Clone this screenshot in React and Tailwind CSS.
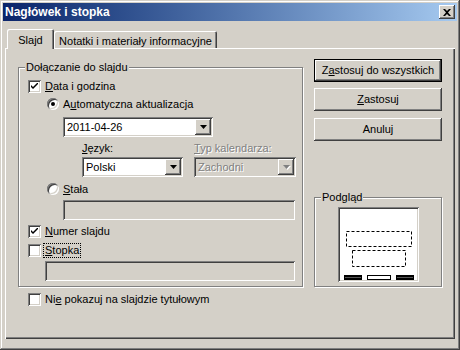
import { useState } from 'react'

const raised =
  'shadow-[inset_-1px_-1px_#404040,inset_1px_1px_#ffffff,inset_-2px_-2px_#808080,inset_2px_2px_#d4d0c8]'
const sunken =
  'shadow-[inset_1px_1px_#808080,inset_-1px_-1px_#ffffff,inset_2px_2px_#404040,inset_-2px_-2px_#d4d0c8]'
const etched = 'border border-[#808080] shadow-[inset_1px_1px_#ffffff,1px_1px_#ffffff]'

function Check({ checked, children, className = '', focus = false }) {
  return (
    <div className={'flex h-[13px] items-center ' + className}>
      <div className={'flex h-[13px] w-[13px] shrink-0 items-center justify-center bg-white ' + sunken}>
        {checked && (
          <svg width="7" height="7" viewBox="0 0 7 7">
            <path d="M0 2 L0 4 L2 6 L7 1 L7 -1 L2 4 Z" fill="#000" />
          </svg>
        )}
      </div>
      <span
        className={
          'ml-[2px] px-[2px] leading-[15px] ' +
          (focus ? 'outline outline-1 outline-dotted outline-black -outline-offset-1' : '')
        }
      >
        {children}
      </span>
    </div>
  )
}

function Radio({ checked, children, className = '' }) {
  return (
    <div className={'flex h-[12px] items-center ' + className}>
      <div
        className={
          'flex h-[12px] w-[12px] shrink-0 items-center justify-center rounded-full bg-white shadow-[inset_1px_1px_#808080,inset_-1px_-1px_#ffffff,inset_2px_2px_#404040,inset_-2px_-2px_#d4d0c8]'
        }
      >
        {checked && <div className="h-[4px] w-[4px] rounded-full bg-black" />}
      </div>
      <span className="ml-[4px] leading-[15px]">{children}</span>
    </div>
  )
}

function Arrow({ disabled }) {
  return (
    <svg width="7" height="4" viewBox="0 0 7 4" className={disabled ? 'drop-shadow-[1px_1px_0_#ffffff]' : ''}>
      <path d="M0 0 H7 L3.5 4 Z" fill={disabled ? '#808080' : '#000'} />
    </svg>
  )
}

function Combo({ value, disabled, className = '' }) {
  return (
    <div
      className={
        'flex h-[20px] items-center p-[2px] ' +
        sunken +
        ' ' +
        (disabled ? 'bg-[#d4d0c8] text-[#808080]' : 'bg-white') +
        ' ' +
        className
      }
    >
      <span className={'flex-1 pl-[2px] ' + (disabled ? '[text-shadow:1px_1px_#ffffff]' : '')}>{value}</span>
      <div className={'flex h-[16px] w-[16px] items-center justify-center bg-[#d4d0c8] ' + raised}>
        <Arrow disabled={disabled} />
      </div>
    </div>
  )
}

function Field({ className = '' }) {
  return <div className={'h-[20px] bg-[#d4d0c8] ' + sunken + ' ' + className} />
}

function Btn({ children, isDefault }) {
  if (isDefault) {
    return (
      <div className="h-[23px] w-[128px] border border-black">
        <div className={'flex h-full items-center justify-center bg-[#d4d0c8] ' + raised}>{children}</div>
      </div>
    )
  }
  return (
    <div className={'flex h-[23px] w-[128px] items-center justify-center bg-[#d4d0c8] ' + raised}>
      {children}
    </div>
  )
}

function Group({ label, className = '', children }) {
  return (
    <div className={'relative ' + etched + ' ' + className}>
      <span className="absolute -top-[8px] left-[6px] bg-[#d4d0c8] px-[1px] leading-[15px]">{label}</span>
      {children}
    </div>
  )
}

function Preview() {
  return (
    <div className={'mx-auto mt-[9px] h-[75px] w-[81px] bg-white p-[2px] ' + sunken}>
      <svg width="77" height="71" viewBox="0 0 77 71">
        <rect x="6.5" y="22.5" width="65" height="15" fill="none" stroke="#000" strokeDasharray="3 2" />
        <rect x="12.5" y="41.5" width="53" height="16" fill="none" stroke="#000" strokeDasharray="3 2" />
        <rect x="4" y="66" width="18" height="5" fill="#000" />
        <rect x="5" y="68" width="16" height="1" fill="#555" />
        <rect x="27.5" y="66.5" width="23" height="4" fill="#fff" stroke="#000" />
        <rect x="56" y="66" width="18" height="5" fill="#000" />
        <rect x="57" y="68" width="16" height="1" fill="#555" />
      </svg>
    </div>
  )
}

export default function App() {
  const [tab, setTab] = useState(0)

  return (
    <div
      className={
        'flex h-[350px] w-[460px] flex-col bg-[#d4d0c8] p-[3px] font-[Liberation_Sans,Arial,sans-serif] text-[11px] text-black shadow-[inset_-1px_-1px_#404040,inset_1px_1px_#d4d0c8,inset_-2px_-2px_#808080,inset_2px_2px_#ffffff]'
      }
    >
      {/* title bar */}
      <div className="flex h-[18px] items-center bg-linear-to-r from-[#0a246a] to-[#a6caf0] pl-[2px] pr-[2px]">
        <span className="flex-1 text-[12px] font-bold text-white">Nagłówek i stopka</span>
        <div className={'flex h-[14px] w-[16px] items-center justify-center bg-[#d4d0c8] ' + raised}>
          <svg width="8" height="7" viewBox="0 0 8 7">
            <path d="M0 0 L2 0 L4 2 L6 0 L8 0 L5 3.5 L8 7 L6 7 L4 5 L2 7 L0 7 L3 3.5 Z" fill="#000" />
          </svg>
        </div>
      </div>

      <div className="px-[2px] pt-[8px]">
        {/* tabs */}
        <div className="flex h-[19px] items-end pl-[2px]">
          <button
            type="button"
            onClick={() => setTab(0)}
            className="relative z-10 mb-[-1px] flex h-[20px] w-[47px] items-start justify-center rounded-t-[2px] bg-[#d4d0c8] pt-[3px] shadow-[inset_1px_1px_#ffffff,inset_-1px_0_#404040,inset_-2px_0_#808080]"
          >
            Slajd
          </button>
          <button
            type="button"
            onClick={() => setTab(1)}
            className="flex h-[17px] w-[163px] items-start justify-center rounded-t-[2px] bg-[#d4d0c8] pt-[2px] shadow-[inset_1px_1px_#ffffff,inset_-1px_0_#404040,inset_-2px_0_#808080]"
          >
            Notatki i materiały informacyjne
          </button>
        </div>

        {/* panel */}
        <div
          className={
            'flex h-[291px] pl-[13px] pt-[11px] shadow-[inset_1px_1px_#ffffff,inset_-1px_-1px_#404040,inset_-2px_-2px_#808080]'
          }
        >
          <div className="mt-[8px] flex w-[285px] flex-col">
            <Group label="Dołączanie do slajdu" className="h-[220px]">
              <div className="flex flex-col pl-[9px]">
                <Check checked className="mt-[12px]">
                  <u>D</u>ata i godzina
                </Check>
                <Radio checked className="ml-[19px] mt-[5px]">
                  A<u>u</u>tomatyczna aktualizacja
                </Radio>
                <Combo value="2011-04-26" className="ml-[35px] mt-[7px] w-[150px]" />
                <div className="ml-[54px] mt-[5px] flex">
                  <div className="flex w-[101px] flex-col">
                    <span className="h-[13px] leading-[13px]">
                      <u>J</u>ęzyk:
                    </span>
                    <Combo value="Polski" className="mt-[2px]" />
                  </div>
                  <div className="ml-[11px] flex w-[102px] flex-col text-[#808080]">
                    <span className="h-[13px] leading-[13px] [text-shadow:1px_1px_#ffffff]">
                      <u>T</u>yp kalendarza:
                    </span>
                    <Combo value="Zachodni" disabled className="mt-[2px]" />
                  </div>
                </div>
                <Radio className="ml-[19px] mt-[6px]">
                  <u>S</u>tała
                </Radio>
                <Field className="ml-[35px] mt-[5px] w-[232px]" />
                <Check checked className="mt-[5px]">
                  <u>N</u>umer slajdu
                </Check>
                <Check focus className="mt-[6px]">
                  <u>S</u>topka
                </Check>
                <Field className="ml-[17px] mt-[4px] w-[250px]" />
              </div>
            </Group>
            <Check className="ml-[10px] mt-[6px]">
              Ni<u>e</u> pokazuj na slajdzie tytułowym
            </Check>
          </div>

          <div className="ml-[11px] flex w-[128px] flex-col">
            <Btn isDefault>
              <span>
                Z<u>a</u>stosuj do wszystkich
              </span>
            </Btn>
            <div className="mt-[6px]">
              <Btn>
                <span>
                  <u>Z</u>astosuj
                </span>
              </Btn>
            </div>
            <div className="mt-[7px]">
              <Btn>Anuluj</Btn>
            </div>
            <Group label="Podgląd" className="mt-[56px] h-[90px]">
              <Preview />
            </Group>
          </div>
        </div>
      </div>
    </div>
  )
}
